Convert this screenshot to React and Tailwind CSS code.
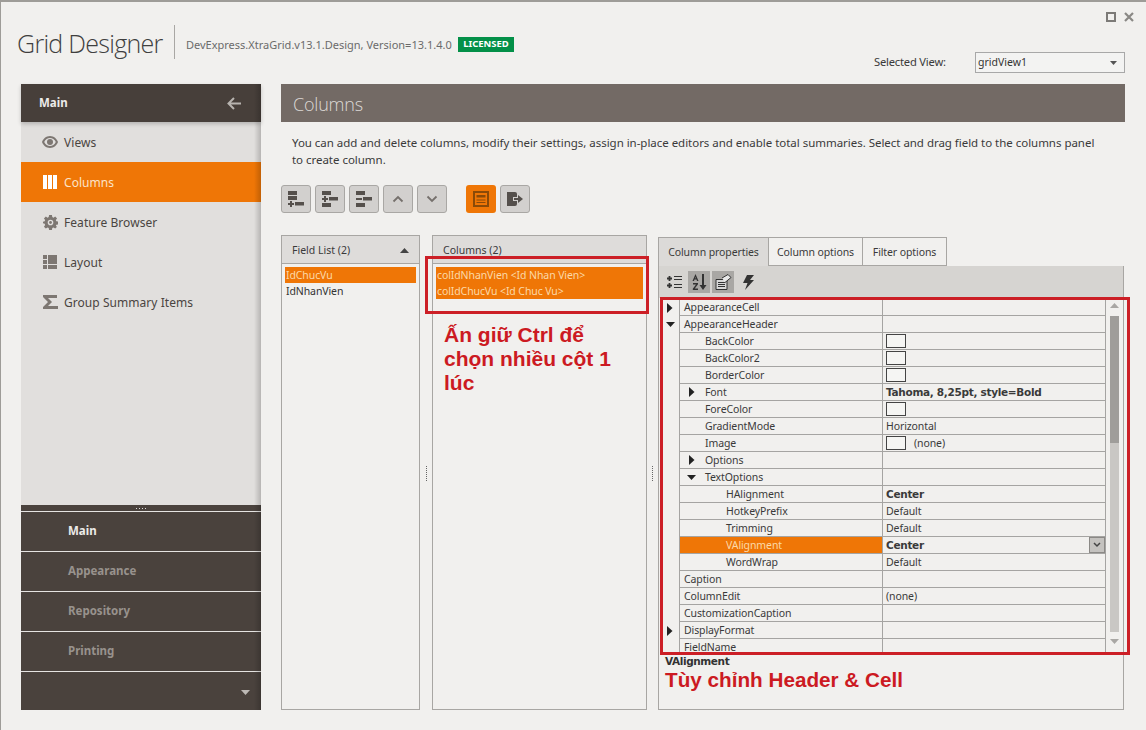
import React from "react";

const sans = "[font-family:'Noto_Sans','Open_Sans',sans-serif]";

function EyeIcon() {
  return (
    <svg width="16" height="12" viewBox="0 0 16 12" fill="#7d7772">
      <path fillRule="evenodd" d="M8 0C4 0 1.200 2.800 0 6c1.200 3.200 4 6 8 6s6.800-2.800 8-6C14.800 2.800 12 0 8 0zm0 2c2.400 0 4.600 1.600 5.800 4-1.200 2.400-3.400 4-5.800 4S3.400 8.400 2.200 6C3.400 3.600 5.600 2 8 2z" />
      <circle cx="8" cy="6" r="3" />
    </svg>
  );
}
function ColumnsIcon() {
  return (
    <svg width="14" height="14" viewBox="0 0 14 14" fill="#fff">
      <rect x="0" y="0" width="4" height="14" />
      <rect x="5" y="0" width="4" height="14" />
      <rect x="10" y="0" width="4" height="14" />
    </svg>
  );
}
function GearIcon() {
  return (
    <svg width="15" height="15" viewBox="0 0 16 16" fill="#7d7772">
      <path fillRule="evenodd" d="M6.500 0h3l.4 2.200 1.300.6L13 1.500 15 3.600l-1.300 1.800.5 1.300 2.300.4v3l-2.300.4-.5 1.300L15 12.400 13 14.500l-1.800-1.300-1.300.6-.4 2.200h-3l-.4-2.200-1.300-.6L3 14.500 1 12.400l1.300-1.800-.5-1.300L0 8.900V7.100l1.800-.4.500-1.300L1 3.600 3 1.500l1.800 1.300 1.300-.6zM8 5a3 3 0 100 6 3 3 0 000-6z" />
      <circle cx="8" cy="8" r="1.500" />
    </svg>
  );
}
function LayoutIcon() {
  return (
    <svg width="14" height="14" viewBox="0 0 14 14" fill="#7d7772">
      <rect x="0" y="0" width="4" height="4" />
      <rect x="0" y="5" width="4" height="4" />
      <rect x="0" y="10" width="4" height="4" />
      <rect x="5" y="0" width="9" height="9" />
      <rect x="5" y="10" width="9" height="4" />
    </svg>
  );
}
function SigmaIcon() {
  return (
    <svg width="15" height="14" viewBox="0 0 15 14" fill="#7d7772">
      <path d="M0 0h14v3H5l4 4-4 4h10v3H0v-2l5-5-5-5z" />
    </svg>
  );
}

function Bars({ variant }) {
  const c = "#55504c";
  if (variant === "add") {
    return (
      <svg width="16" height="16" viewBox="0 0 16 16" fill={c}>
        <rect x="0" y="0" width="9" height="4" />
        <rect x="0" y="5" width="9" height="4" />
        <path d="M2 10h2v2h2v2H4v2H2v-2H0v-2h2z" />
        <rect x="7" y="11" width="9" height="3.500" />
      </svg>
    );
  }
  if (variant === "insert") {
    return (
      <svg width="16" height="16" viewBox="0 0 16 16" fill={c}>
        <rect x="0" y="0" width="9" height="4" />
        <path d="M2 5h2v2h2v2H4v2H2V9H0V7h2z" />
        <rect x="7" y="6" width="9" height="3.500" />
        <rect x="0" y="12" width="9" height="4" />
      </svg>
    );
  }
  return (
    <svg width="16" height="16" viewBox="0 0 16 16" fill={c}>
      <rect x="0" y="0" width="9" height="4" />
      <rect x="0" y="7" width="6" height="2" />
      <rect x="7" y="6" width="9" height="3.500" />
      <rect x="0" y="12" width="9" height="4" />
    </svg>
  );
}

function ToolButton({ children, active }) {
  return (
    <div
      className={
        active
          ? "w-[30px] h-[28px] rounded-[3px] bg-[#ef7606] flex items-center justify-center"
          : "w-[30px] h-[28px] rounded-[3px] bg-[#d2d0ce] border border-[#a9a7a4] flex items-center justify-center"
      }
    >
      {children}
    </div>
  );
}

function Chevron({ up }) {
  return (
    <svg width="12" height="8" viewBox="0 0 12 8" fill="none" stroke="#75706c" strokeWidth="1.800">
      <path d={up ? "M1.500 6.500L6 2l4.500 4.500" : "M1.500 1.500L6 6l4.500-4.500"} />
    </svg>
  );
}

function SideItem({ icon, label, active }) {
  return (
    <div
      className={
        active
          ? "h-10 flex items-center pl-[21px] gap-[6px] bg-[#ef7606] text-[#fbe3c8]"
          : "h-10 flex items-center pl-[21px] gap-[6px] text-[#4a4541]"
      }
    >
      <span className="w-4 flex justify-center">{icon}</span>
      <span className="text-[12px] tracking-[0.05px] pt-[2px]">{label}</span>
    </div>
  );
}

function BottomItem({ label, active }) {
  return (
    <div
      className={
        "h-10 border-t border-[#e6e4e2] flex items-center pl-[47px] pb-[2px] text-[11.500px] font-bold " +
        (active ? "text-[#ecebe9]" : "text-[#98928d]")
      }
    >
      {label}
    </div>
  );
}

function ArrowRight() {
  return (
    <svg width="6" height="10" viewBox="0 0 6 10" fill="#222">
      <path d="M0 0l5.500 5L0 10z" />
    </svg>
  );
}
function ArrowDown() {
  return (
    <svg width="9" height="5" viewBox="0 0 9 5" fill="#222">
      <path d="M0 0h9L4.500 5z" />
    </svg>
  );
}

function Swatch() {
  return <span className="inline-block w-5 h-[14px] border border-[#444] bg-[#f5f5f3]" />;
}

const rows = [
  { n: "AppearanceCell", d: 0, a: "r" },
  { n: "AppearanceHeader", d: 0, a: "d" },
  { n: "BackColor", d: 1, swatch: true },
  { n: "BackColor2", d: 1, swatch: true },
  { n: "BorderColor", d: 1, swatch: true },
  { n: "Font", d: 1, a: "r", v: "Tahoma, 8,25pt, style=Bold", b: true },
  { n: "ForeColor", d: 1, swatch: true },
  { n: "GradientMode", d: 1, v: "Horizontal" },
  { n: "Image", d: 1, swatch: true, v: "(none)" },
  { n: "Options", d: 1, a: "r" },
  { n: "TextOptions", d: 1, a: "d" },
  { n: "HAlignment", d: 2, v: "Center", b: true },
  { n: "HotkeyPrefix", d: 2, v: "Default" },
  { n: "Trimming", d: 2, v: "Default" },
  { n: "VAlignment", d: 2, v: "Center", b: true, sel: true },
  { n: "WordWrap", d: 2, v: "Default" },
  { n: "Caption", d: 0 },
  { n: "ColumnEdit", d: 0, v: "(none)" },
  { n: "CustomizationCaption", d: 0 },
  { n: "DisplayFormat", d: 0, a: "r" },
  { n: "FieldName", d: 0 },
];

function PropRow({ r }) {
  const pad = r.d === 0 ? "pl-[4px]" : r.d === 1 ? "pl-[25px]" : "pl-[46px]";
  return (
    <div className="flex h-[17px] shrink-0">
      <div className="w-[20px] flex items-center justify-center pl-[2px]">
        {r.d === 0 && r.a === "r" && <ArrowRight />}
        {r.d === 0 && r.a === "d" && <ArrowDown />}
      </div>
      <div
        className={
          "relative w-[203px] border-l border-b border-[#a5a4a2] flex items-center " +
          pad +
          (r.sel ? " bg-[#ef7606] text-[#fbd9a8]" : " text-[#3a3a3a]")
        }
      >
        {r.d === 1 && r.a && (
          <span className="absolute left-[7px] top-0 h-full w-[9px] flex items-center justify-center">
            {r.a === "r" ? <ArrowRight /> : <ArrowDown />}
          </span>
        )}
        {r.n}
      </div>
      <div
        className={
          "relative w-[224px] border-l border-r border-b border-[#a5a4a2] flex items-center gap-[8px] pl-[3px] text-[#3a3a3a] " +
          (r.b ? "font-bold [font-family:'DejaVu_Sans',sans-serif] text-[10.500px] tracking-[-0.3px]" : "")
        }
      >
        {r.swatch && <Swatch />}
        {r.v && <span>{r.v}</span>}
        {r.sel && (
          <span className="absolute right-0 top-0 w-4 h-4 bg-[#c4c2bf] border border-[#8b8986] flex items-center justify-center">
            <svg width="8" height="6" viewBox="0 0 8 6" fill="none" stroke="#444" strokeWidth="1.500">
              <path d="M1 1l3 3 3-3" />
            </svg>
          </span>
        )}
      </div>
    </div>
  );
}

export default function App() {
  return (
    <div className={"relative w-[1146px] h-[730px] overflow-hidden bg-[#f1f0ee] border-t-2 border-l border-[#9e9c98] text-[#333] " + sans}>
      {/* Title bar */}
      <div className="h-[82px] flex items-start pl-4 pr-3">
        <div className="mt-[22px] text-[25px] leading-[38px] font-light text-[#3f3f3f] [font-family:'Open_Sans',sans-serif] tracking-[-0.7px] w-[157px] whitespace-nowrap">
          Grid Designer
        </div>
        <div className="mt-[23px] w-px h-[34px] bg-[#a9a7a4]" />
        <div className="mt-[35px] ml-[11px] w-[261px] text-[11px] leading-[16px] text-[#6b6b6b] whitespace-nowrap">
          DevExpress.XtraGrid.v13.1.Design, Version=13.1.4.0
        </div>
        <div className="mt-[35px] ml-[11px] w-[56px] h-[15px] bg-[#039048] text-white text-[9.500px] font-bold flex items-center justify-center">
          LICENSED
        </div>
        <div className="ml-auto flex flex-col items-end">
          <div className="mt-[10px] flex items-center gap-[8px]">
            <span className="block w-[10px] h-[10px] border-2 border-[#7c7a77]" />
            <svg width="10" height="10" viewBox="0 0 10 10" stroke="#8a8885" strokeWidth="2.200">
              <path d="M1 1l8 8M9 1l-8 8" />
            </svg>
          </div>
          <div className="mt-[30px] mr-[9px] flex items-center">
            <span className="w-[101px] text-[11.200px] tracking-[-0.2px] text-[#3a3a3a]">Selected View:</span>
            <div className="w-[150px] h-[21px] border border-[#a8a8a8] bg-[#f3f3f2] flex items-center pl-[2px] pr-[7px] text-[10.500px] text-[#333]">
              gridView1
              <svg className="ml-auto" width="7" height="4" viewBox="0 0 7 4" fill="#555">
                <path d="M0 0h7L3.500 4z" />
              </svg>
            </div>
          </div>
        </div>
      </div>

      {/* Body */}
      <div className="h-[626px] flex pl-5">
        {/* Sidebar */}
        <div className="relative w-[240px] flex flex-col shrink-0">
          <div className="relative z-10 h-[38px] shrink-0 bg-[#473f3a] flex items-center justify-between pl-[18px] pr-[20px] text-white shadow-[0_2px_4px_#0003]">
            <span className="text-[11.500px] font-bold text-[#ecebe9]">Main</span>
            <svg width="14" height="13" viewBox="0 0 14 13" fill="none" stroke="#b7b3af" strokeWidth="2">
              <path d="M7 1L1.500 6.500 7 12M2 6.500h12" />
            </svg>
          </div>
          <div className="flex-1 bg-[#e1dfdd]">
            <SideItem icon={<EyeIcon />} label="Views" />
            <SideItem icon={<ColumnsIcon />} label="Columns" active />
            <SideItem icon={<GearIcon />} label="Feature Browser" />
            <SideItem icon={<LayoutIcon />} label="Layout" />
            <SideItem icon={<SigmaIcon />} label="Group Summary Items" />
          </div>
          <div className="shrink-0 bg-[#4a423d]">
            <div className="h-[6px] flex items-center justify-center gap-[2px]">
              <span className="w-px h-px bg-[#ddd]" />
              <span className="w-px h-px bg-[#ddd]" />
              <span className="w-px h-px bg-[#ddd]" />
              <span className="w-px h-px bg-[#ddd]" />
            </div>
            <BottomItem label="Main" active />
            <BottomItem label="Appearance" />
            <BottomItem label="Repository" />
            <BottomItem label="Printing" />
            <div className="h-[39px] border-t border-[#e6e4e2] flex justify-end items-center pr-[11px] pt-[2px]">
              <svg width="9" height="5" viewBox="0 0 9 5" fill="#bdb9b5">
                <path d="M0 0h9L4.500 5z" />
              </svg>
            </div>
          </div>
          <div className="absolute z-20 right-0 top-0 bottom-0 w-[7px] bg-linear-to-l from-[#00000030] to-transparent" />
        </div>

        {/* Main */}
        <div className="ml-5 w-[844px] flex flex-col">
          <div className="h-[38px] shrink-0 bg-[#736a65] pl-[12px] pt-[2px] flex items-center text-[18px] font-light text-[#ddd9d6] [font-family:'Open_Sans',sans-serif] tracking-[-0.2px]">
            Columns
          </div>
          <div className="pt-[12px] pl-[11px] pr-[20px] text-[11.500px] leading-[17px] tracking-[-0.03px] text-[#3a3a3a] h-[47px]">
            <div className="whitespace-nowrap">
              You can add and delete columns, modify their settings, assign in-place editors and enable total summaries. Select and drag field to the columns panel
            </div>
            <div>to create column.</div>
          </div>
          <div className="h-[28px] mt-[16px] flex items-center gap-1 shrink-0">
            <ToolButton><Bars variant="add" /></ToolButton>
            <ToolButton><Bars variant="insert" /></ToolButton>
            <ToolButton><Bars variant="remove" /></ToolButton>
            <ToolButton><Chevron up /></ToolButton>
            <ToolButton><Chevron /></ToolButton>
            <div className="w-[11px]" />
            <ToolButton active>
              <svg width="16" height="16" viewBox="0 0 16 16" fill="none" stroke="#8a4a08">
                <rect x="1" y="1" width="14" height="14" strokeWidth="2" />
                <rect x="3.500" y="4" width="9" height="2.500" fill="#8a4a08" stroke="none" />
                <path d="M3.500 9h9M3.500 11.500h9" strokeWidth="1" />
              </svg>
            </ToolButton>
            <ToolButton>
              <svg width="16" height="14" viewBox="0 0 16 14" fill="#55504c">
                <path d="M0 0h8a2 2 0 012 2v3H6v4h4v3a2 2 0 01-2 2H0z" />
                <path d="M7 6h4V3l5 4-5 4V8H7z" />
              </svg>
            </ToolButton>
          </div>

          {/* Three panes */}
          <div className="mt-[22px] h-[475px] flex">
            <div className="w-[139px] border border-[#a8a6a3] flex flex-col">
              <div className="h-[28px] shrink-0 bg-[#dedcda] border-b border-[#a8a6a3] flex items-center justify-between pl-[10px] pr-[10px] pt-[2px] text-[10.500px] text-[#3a3a3a]">
                Field List (2)
                <svg width="9" height="5" viewBox="0 0 9 5" fill="#444">
                  <path d="M0 5h9L4.500 0z" />
                </svg>
              </div>
              <div className="pt-[3px] px-[3px] text-[10.500px] tracking-[-0.1px] text-[#333]">
                <div className="h-4 bg-[#ef7606] text-[#fbd9a8] pl-[1px] leading-4">IdChucVu</div>
                <div className="h-4 pl-[1px] leading-4">IdNhanVien</div>
              </div>
            </div>
            <Dots w="w-3" />
            <div className="w-[215px] border border-[#a8a6a3] flex flex-col">
              <div className="h-[28px] shrink-0 bg-[#dedcda] border-b border-[#a8a6a3] flex items-center pl-[10px] pt-[2px] text-[10.500px] text-[#3a3a3a]">
                Columns (2)
              </div>
              <div className="pt-[3px] px-[3px] text-[10.500px] tracking-[-0.1px]">
                <div className="h-[32px] bg-[#ef7606] text-[#fbd9a8] pl-[1px]">
                  <div className="h-4 leading-4">colIdNhanVien &lt;Id Nhan Vien&gt;</div>
                  <div className="h-4 leading-4">colIdChucVu &lt;Id Chuc Vu&gt;</div>
                </div>
              </div>
              <div className="mt-[24px] pl-[11px] text-[21px] leading-[24px] font-bold text-[#cc1a22] [font-family:'Liberation_Sans',sans-serif]">
                Ấn giữ Ctrl để
                <br />
                chọn nhiều cột 1
                <br />
                lúc
              </div>
            </div>
            <Dots w="w-[11px]" />
            <div className="w-[466px] flex flex-col">
              <div className="h-[31px] shrink-0 pt-[2px] flex items-stretch text-[10.500px] tracking-[-0.1px] text-[#3a3a3a]">
                <div className="w-[110px] pt-[2px] bg-[#dcdad8] border-l border-t border-[#a8a6a3] flex items-center justify-center">Column properties</div>
                <div className="w-[95px] pt-[2px] border border-[#a8a6a3] flex items-center justify-center">Column options</div>
                <div className="w-[84px] pt-[2px] border border-l-0 border-[#a8a6a3] flex items-center justify-center">Filter options</div>
              </div>
              <div className="flex-1 border border-t-0 border-[#a8a6a3] flex flex-col">
                <div className="h-[32px] shrink-0 bg-[#d6d4d1] flex items-center pl-[7px] gap-[2px]">
                  <PropToolbar />
                </div>
                <div className="h-[357px] shrink-0 flex overflow-hidden text-[10.500px] tracking-[-0.1px] leading-none">
                  <div className="flex flex-col pt-px">
                    {rows.map((r) => (
                      <PropRow key={r.n} r={r} />
                    ))}
                  </div>
                  <div className="flex-1 flex flex-col items-center pt-[3px]">
                    <svg width="9" height="5" viewBox="0 0 9 5" fill="#a9a7a4" className="mt-[2px]">
                      <path d="M0 5h9L4.500 0z" />
                    </svg>
                    <div className="mt-[8px] w-[9px] h-[316px] bg-[#c9c7c4]">
                      <div className="h-[127px] bg-[#9f9d9a]" />
                    </div>
                    <svg width="9" height="5" viewBox="0 0 9 5" fill="#a9a7a4" className="mt-[7px]">
                      <path d="M0 0h9L4.500 5z" />
                    </svg>
                  </div>
                </div>
                <div className="pl-[6px]">
                  <div className="text-[10.500px] leading-[12px] font-bold text-[#333] [font-family:'DejaVu_Sans',sans-serif] tracking-[-0.4px]">VAlignment</div>
                  <div className="text-[20.700px] leading-[26px] font-bold text-[#cc1a22] [font-family:'Liberation_Sans',sans-serif]">
                    Tùy chỉnh Header &amp; Cell
                  </div>
                </div>
              </div>
            </div>
          </div>
        </div>
      </div>

      {/* Annotation boxes drawn over the screenshot */}
      <div className="absolute left-[424px] top-[254px] w-[224px] h-[58px] border-[3px] border-[#cc1f26] pointer-events-none" />
      <div className="absolute left-[659px] top-[295px] w-[470px] h-[358px] border-[3px] border-[#cc1f26] pointer-events-none" />
    </div>
  );
}

function Dots({ w }) {
  return (
    <div className={w + " flex items-center justify-center pt-[2px]"}>
      <div className="flex flex-col gap-[1px]">
        {[0, 1, 2, 3, 4, 5, 6, 7].map((i) => (
          <span key={i} className="w-px h-px bg-[#666]" />
        ))}
      </div>
    </div>
  );
}

function PropToolbar() {
  const Sel = "w-[22px] h-[22px] bg-[#a9a7a4] flex items-center justify-center";
  return (
    <>
      <span className="w-[16px] h-[22px] flex items-center justify-center">
        <svg width="15" height="14" viewBox="0 0 15 14" stroke="#333" fill="none" strokeWidth="1.200">
          <path d="M2.500 1v5M0 3.500h5M2.500 8v5M0 10.500h5" strokeWidth="1.800" />
          <path d="M7 1.500h8M7 4.500h8M7 9.500h8M7 12.500h8" />
        </svg>
      </span>
      <span className={Sel + " ml-[4px]"}>
        <svg width="15" height="16" viewBox="0 0 15 16" fill="#333">
          <path d="M3.500 0l3 7H5l-.5-1.500h-2L2 7H.5zM3 4.300h1L3.500 3z" fillRule="evenodd" />
          <path d="M1 9h5v1.200L2.800 14.500H6V16H.8v-1.200L4 10.500H1z" />
          <path d="M10 0h2v11h2.500L11 16l-3.500-5H10z" />
        </svg>
      </span>
      <span className={Sel}>
        <svg width="17" height="16" viewBox="0 0 17 16" fill="none" stroke="#333">
          <path d="M1 5.500h11v10H1z" fill="#d8d8d8" />
          <path d="M3 8.500h7M3 10.500h7M3 12.500h7" />
          <path d="M7 4l6-3.500 3 3-6 5" fill="#e8e8e8" />
        </svg>
      </span>
      <span className="w-[20px] flex items-center justify-center ml-[2px]">
        <svg width="11" height="15" viewBox="0 0 11 15" fill="#333">
          <path d="M4 0h7L7 5h4L2 15l2.500-7H0z" />
        </svg>
      </span>
    </>
  );
}
